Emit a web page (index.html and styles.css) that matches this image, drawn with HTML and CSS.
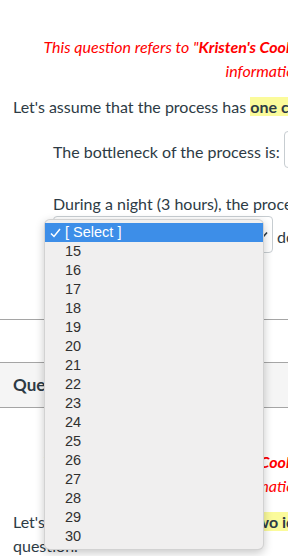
FILE: index.html
```html
<!DOCTYPE html>
<html>
<head>
  <title>Quiz - Kristen's Cookie Company</title>
  <link rel="stylesheet" href="styles.css">
</head>
<body>

  <div class="quiz">

    <div class="question first">
      <div class="q-body">
        <p class="note">This question refers to "<b>Kristen's Cookie Company</b>" case. Use the case<br>information to</p>
        <p>Let's assume that the process has <mark>one cookie oven</mark>.</p>
        <div class="answers">
          <p>The bottleneck of the process is: <span class="select">[ Select ]</span></p>
          <p>During a night (3 hours), the process can make <span class="select wide">[ Select ]
            <svg class="caret" width="10" height="8" viewBox="0 0 10 8"><path d="M1 1.5 L5 6 L9 1.5" fill="none" stroke="#2d3b45" stroke-width="1.6"/></svg></span> dozens of cookies.</p>
        </div>
      </div>
    </div>

    <div class="question">
      <div class="q-header">Question 2</div>
      <div class="q-body">
        <p class="note">This question refers to "<b>Kristen's Cookie Company</b>" case. Use the case<br>information to</p>
        <p>Let's assume that the process has <mark>two identical ovens</mark> from now on in this question.</p>
      </div>
    </div>

  </div>

  <!-- open dropdown of the second select -->
  <div class="dropdown">
    <div class="option selected">
      <svg class="check" width="11" height="10" viewBox="0 0 11 10"><path d="M1 5.5 L4 8.5 L10 1" fill="none" stroke="#fff" stroke-width="1.5"/></svg>
      [ Select ]
    </div>
    <div class="option">15</div>
    <div class="option">16</div>
    <div class="option">17</div>
    <div class="option">18</div>
    <div class="option">19</div>
    <div class="option">20</div>
    <div class="option">21</div>
    <div class="option">22</div>
    <div class="option">23</div>
    <div class="option">24</div>
    <div class="option">25</div>
    <div class="option">26</div>
    <div class="option">27</div>
    <div class="option">28</div>
    <div class="option">29</div>
    <div class="option">30</div>
  </div>

</body>
</html>
```

FILE: styles.css
```css
body {
  margin: 0;
  font-family: Lato, "Open Sans", sans-serif;
  font-size: 16px;
  line-height: 24px;
  color: #2d3b45;
  background: #fff;
  overflow: hidden;
}

.quiz {
  width: 560px;
}

p {
  margin: 0 0 12px;
}

.question {
  border-top: 1px solid #a5a5a5;
  border-bottom: 1px solid #a5a5a5;
  margin-bottom: 42px;
}

.question.first {
  border-top: none;
}

.q-header {
  height: 44px;
  line-height: 44px;
  padding-left: 13px;
  background: #f5f5f5;
  border-bottom: 1px solid #a5a5a5;
  font-weight: bold;
  font-size: 17px;
}

.q-body {
  padding: 42px 13px;
}

.first .q-body {
  padding-top: 35px;
}

.note {
  width: 520px;
  color: #f00;
  font-style: italic;
  font-size: 16px;
  text-align: center;
}

mark {
  background: #fbfb9b;
  color: #2d3b45;
  font-weight: bold;
}

.answers {
  padding-left: 40px;
}

.answers p {
  margin-bottom: 24px;
}

.select {
  display: inline-flex;
  align-items: center;
  justify-content: space-between;
  box-sizing: border-box;
  width: 140px;
  height: 37px;
  padding: 0 4px 0 10px;
  vertical-align: 3px;
  background: #fff;
  border: 1px solid #c7cdd1;
  border-radius: 4px;
  font-size: 14px;
}

.select.wide {
  width: 220px;
}

.dropdown {
  position: absolute;
  left: 44px;
  top: 219px;
  width: 220px;
  box-sizing: border-box;
  padding: 3px 0;
  background: #f0efef;
  border: 1px solid rgba(0, 0, 0, 0.12);
  border-radius: 6px;
  box-shadow: 0 3px 10px rgba(0, 0, 0, 0.22);
  font-family: "Liberation Sans", Arial, sans-serif;
  font-size: 14.5px;
  line-height: 19px;
  color: #303030;
}

.option {
  height: 19px;
  padding-left: 20px;
  position: relative;
}

.option.selected {
  background: #3d8ee8;
  color: #fff;
}

.check {
  position: absolute;
  left: 5px;
  top: 5px;
}
```
